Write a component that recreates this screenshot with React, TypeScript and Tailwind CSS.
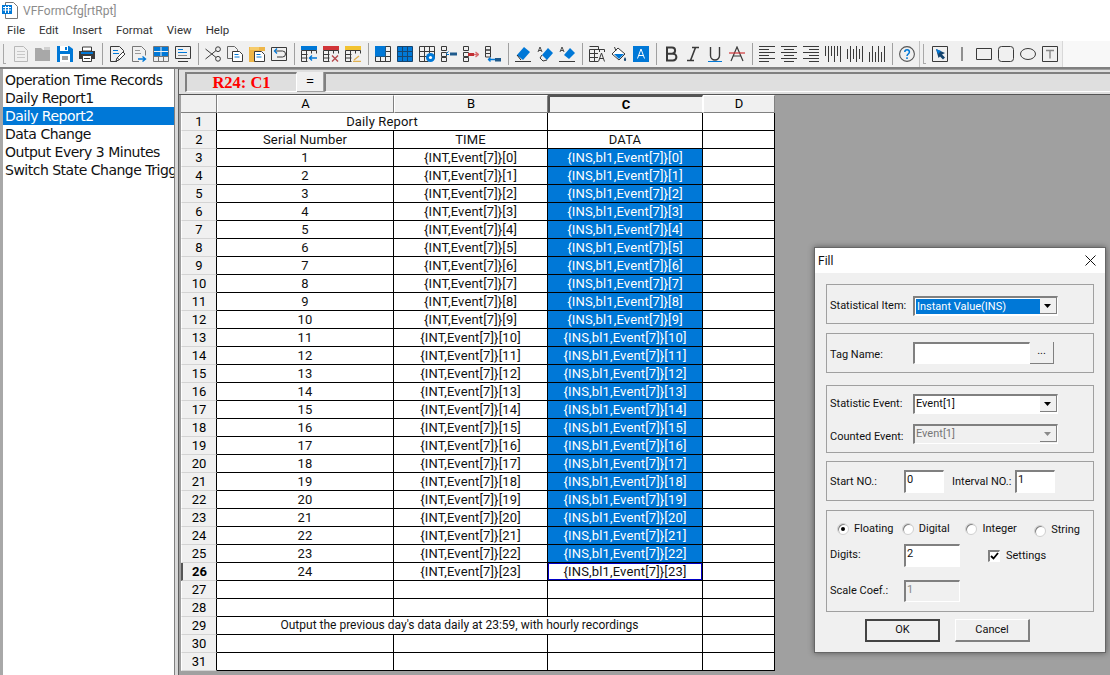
import type { ReactNode } from "react";

const BLUE = "#0078d7";
const DARK = "#3a3a3a";

const Ico = ({ children }: { children: ReactNode }) => (
  <svg width="16" height="16" viewBox="0 0 16 16" fill="none" stroke={DARK} strokeWidth="1" className="block">
    {children}
  </svg>
);

const Doc = ({ c = DARK }: { c?: string }) => <path d="M1.5 .5h9l4 4v11h-13z" stroke={c} />;
const Lines = ({ c = BLUE }: { c?: string }) => <path d="M4 4.5h5M4 7.5h6" stroke={c} />;
const TableGrid = () => <path d="M.5 3.5h15v12H.5zM.5 7.5h15M.5 11.5h15M5.5 3.5v12M10.5 3.5v12" />;

const toolbarGroups: ReactNode[][] = [
  [
    <Ico><Doc c="#b8b8b8" /><path d="M4 5.5h8M4 8.5h8M4 11.5h8" stroke="#c8c8c8" /></Ico>,
    <Ico><path d="M0 2h6l2 2h7v11H0z" fill="#a8a8a8" stroke="none" /><path d="M9 1h6v3H9z" fill="#d0d0d0" stroke="none" /></Ico>,
    <Ico><path d="M0 0h12l4 3v13H0z" fill={BLUE} stroke="none" /><path d="M3 0h8v5H3z" fill="#fff" stroke="none" /><path d="M8 1h2v3H8z" fill={BLUE} stroke="none" /><path d="M3 8h10v8H3z" fill="#fff" stroke="none" /><path d="M5 11h6M5 13h6" stroke={DARK} /></Ico>,
    <Ico><path d="M3.5 1v4h9V1z" fill="#fff" stroke={DARK} /><path d="M0 5h16v8H0z" fill={DARK} stroke="none" /><path d="M2 7h12" stroke={BLUE} strokeWidth="2" /><path d="M3.5 9.5h9v6h-9z" fill="#fff" stroke={DARK} /><path d="M5 12.5h6" /></Ico>,
  ],
  [
    <Ico><path d="M8 15.5H1.5V.5h9l4 4v3" /><Lines /><path d="M7 15l1-3 6-6 2 2-6 6z" fill="#fff" /><path d="M8.5 12l2 2" /></Ico>,
    <Ico><path d="M8 15.5H1.5V.5h9l4 4v5" stroke="#777" /><path d="M4 4.5h5M4 7.5h6" stroke="#999" /><path d="M7 13h7M11.5 10.5L14.5 13l-3 2.5" stroke={BLUE} strokeWidth="1.4" /></Ico>,
    <Ico><path d="M.5.5h15v15H.5zM.5 10.5h15M5.5 10.5v5M10.5 10.5v5" stroke="#777" /><path d="M1 1h6.5v4H1zM8.5 1H15v4H8.5zM1 6h6.5v4H1zM8.5 6H15v4H8.5z" fill={BLUE} stroke="none" /></Ico>,
    <Ico><path d="M.5.5h15v12H.5zM3 15.5h10" /><path d="M3 3.5h5M3 6.5h9" stroke={BLUE} /><path d="M3 9.5h9" stroke="#888" /></Ico>,
  ],
  [
    <Ico><circle cx="13" cy="3.2" r="2.4" /><circle cx="13" cy="12.8" r="2.4" /><path d="M11 4.6L.5 13M11 11.4L.5 3" /></Ico>,
    <Ico><path d="M.5.5h7l3 3v9h-10z" stroke="#666" /><path d="M5.5 5.5h7l3 3v7h-10z" fill="#fff" /><path d="M7.5 8.5h4M7.5 11h5" stroke={BLUE} /></Ico>,
    <Ico><path d="M0 1h16v4H8v11H0z" fill="#eeb648" stroke="none" /><path d="M1 1h9v3H1z" fill="#f6cb6a" stroke="none" /><path d="M5.5 5.5h7l3 3v7h-10z" fill="#fff" /><path d="M7.5 8.5h4M7.5 11h5" stroke={BLUE} /></Ico>,
    <Ico><path d="M.5 1.5h15v13H.5z" /><path d="M4 5h7.5a2.5 2.5 0 010 6H6" /><path d="M6 2.5L3.5 5 6 7.5" stroke={BLUE} strokeWidth="1.3" /></Ico>,
  ],
  [
    <Ico><path d="M0 0h16v4H0z" fill={BLUE} stroke="none" /><path d="M.5 4.5h15v3M.5 4.5v11h6M.5 8.5h6M.5 12h6M5.5 4.5v11M10.5 4.5v3" /><path d="M8 12h8M11 9.5L8.5 12l2.5 2.5" stroke={BLUE} strokeWidth="1.4" /></Ico>,
    <Ico><path d="M0 0h16v4H0z" fill="#d13438" stroke="none" /><path d="M.5 4.5h15v3M.5 4.5v11h6M.5 8.5h6M.5 12h6M5.5 4.5v11M10.5 4.5v3" /><path d="M9 9.5l6 6M15 9.5l-6 6" stroke="#b5484b" strokeWidth="1.4" /></Ico>,
    <Ico><path d="M0 0h16v4H0z" fill="#f2c230" stroke="none" /><path d="M.5 4.5h15v3M.5 4.5v11h6M.5 8.5h6M.5 12h6M5.5 4.5v11M10.5 4.5v3" /><path d="M9 14l5-4M8 15.5h8" stroke="#e0b050" strokeWidth="1.4" /></Ico>,
  ],
  [
    <Ico><path d="M.5.5h15v15H.5zM.5 10.5h15M5.5 10.5v5M10.5 10.5v5M10.5.5v10M10.5 5.5h5" /><path d="M0 0h10.5v10.5H0z" fill={BLUE} stroke="none" /></Ico>,
    <Ico><path d="M.5.5h15v15H.5z" fill={BLUE} stroke="#16456f" /><path d="M.5 5.5h15M.5 10.5h15M5.5.5v15M10.5.5v15" stroke="#16456f" /></Ico>,
    <Ico><path d="M.5.5h15v12M.5.5v15h9M.5 5.5h15M.5 10.5h8M5.5.5v15M10.5.5v7" /><circle cx="11.5" cy="11.5" r="4.5" fill={BLUE} stroke="none" /><circle cx="11.5" cy="11.5" r="1.6" fill="#fff" stroke="none" /></Ico>,
    <Ico><path d="M.5.5h5v4h-5zM.5 6.5h5v4h-5zM.5 11.5h5v4h-5z" /><path d="M5.5 8.5H8" stroke={BLUE} /><path d="M7.5 5.5L5.5 7.5" stroke={BLUE} /><path d="M9 6.5h7v3H9z" fill="#1f5a8c" stroke="none" /></Ico>,
    <Ico><path d="M.5.5h5v4h-5zM.5 6.5h5v4h-5zM.5 11.5h5v4h-5z" /><path d="M5 7h6v3H5z" fill="#c02f33" stroke="none" /><path d="M11 8.5h4M12.5 6L15.5 8.5 12.5 11" stroke="#d96a6d" strokeWidth="1.3" /></Ico>,
    <Ico><path d="M.5.5h5v3.5h-5zM.5 4h5v3.5h-5zM.5 7.5h5V11h-5z" /><path d="M3 13.5h7M5.5 11.5l-2 2 2 2" stroke={BLUE} strokeWidth="1.3" /><path d="M10 12h6v3.5h-6z" fill="#1f5a8c" stroke="none" /></Ico>,
  ],
  [
    <Ico><path d="M2 9l7-8 6 5-7 8z" fill={BLUE} stroke="none" /><path d="M2 9l4 5" stroke="#222" /><path d="M0 15.5h16" /></Ico>,
    <Ico><path d="M5 9l6-7 5 5-6 7z" fill={BLUE} stroke="none" /><path d="M5 9l-2 3 3 3 4-1" /><path d="M1 6L3 1l2 5M1.8 4.5h2.4" strokeWidth=".9" /></Ico>,
    <Ico><path d="M5 9l6-7 5 5-6 6z" fill={BLUE} stroke="none" /><path d="M1 6L3 1l2 5M1.8 4.5h2.4" strokeWidth=".9" /><path d="M0 15.5h16" /></Ico>,
  ],
  [
    <Ico><TableGrid /><path d="M.5.5h9v3" /><rect x="9" y="6" width="7" height="10" fill="#f0f0f0" stroke="none" /><path d="M9.5 15.5L12.5 7l3 8.5M10.8 12.5h3.6" /></Ico>,
    <Ico><path d="M1 8l6-6 7 6-6 6z" fill="#fff" /><path d="M3 8h10l-5 5z" fill={BLUE} stroke="none" /><path d="M5 5L3.5 1" /><path d="M14 11c-1.5 2-1.5 4 0 4s1.5-2 0-4z" fill="#16456f" stroke="none" /></Ico>,
    <Ico><path d="M0 0h16v16H0z" fill={BLUE} stroke="none" /><path d="M4.5 12.5L8 3l3.5 9.5M5.7 9.5h4.6" stroke="#fff" strokeWidth="1" /></Ico>,
  ],
  [
    <Ico><path d="M4 1.5h5a3 3 0 010 6.2H4zM4 7.7h6a3.4 3.4 0 010 6.8H4zM4 1v14" strokeWidth="2" /></Ico>,
    <Ico><path d="M7 1.5h7M2 14.5h7M10.5 1.5l-5 13" strokeWidth="1.6" /></Ico>,
    <Ico><path d="M3.5 1v8.5a4.5 4.5 0 009 0V1" strokeWidth="1.4" /><path d="M1 15.5h14" stroke={BLUE} /></Ico>,
    <Ico><path d="M2 15L8 1l6 14M4.5 10h7" strokeWidth="1.2" /><path d="M0 7h16" stroke="#d13438" strokeWidth="1.2" /></Ico>,
  ],
  [
    <Ico><path d="M0 .5h16M0 3.5h10M0 6.5h16M0 9.5h10M0 12.5h16M0 15.5h10" /></Ico>,
    <Ico><path d="M0 .5h16M3 3.5h10M0 6.5h16M3 9.5h10M0 12.5h16M3 15.5h10" /></Ico>,
    <Ico><path d="M0 .5h16M6 3.5h10M0 6.5h16M6 9.5h10M0 12.5h16M6 15.5h10" /></Ico>,
    <Ico><path d="M.5 0v10M3.5 0v16M6.5 0v10M9.5 0v16M12.5 0v10M15.5 0v16" /></Ico>,
    <Ico><path d="M.5 3v10M3.5 0v16M6.5 3v10M9.5 0v16M12.5 3v10M15.5 0v16" /></Ico>,
    <Ico><path d="M.5 6v10M3.5 0v16M6.5 6v10M9.5 0v16M12.5 6v10M15.5 0v16" /></Ico>,
  ],
  [
    <Ico><circle cx="8" cy="8" r="7.4" stroke="#555" strokeWidth="1.1" /><path d="M5.8 6c0-3 4.6-3 4.6 0 0 2-2.4 2-2.4 4" stroke={BLUE} strokeWidth="1.5" /><path d="M8 11.2v1.8" stroke={BLUE} strokeWidth="1.5" /></Ico>,
  ],
];

const drawTools: ReactNode[] = [
  <Ico><path d="M.5.5h15v15H.5z" /><path d="M4 3l9 4-3 1.5 3 3-2 2-3-3L6.5 12z" fill="#16456f" stroke="none" /><path d="M4 3l5 2-3 3z" fill={BLUE} stroke="none" /></Ico>,
  <Ico><path d="M8 1v14" stroke="#777" strokeWidth="1.6" /></Ico>,
  <Ico><path d="M.5 2.5h15v11H.5z" /></Ico>,
  <Ico><rect x=".5" y=".5" width="15" height="15" rx="3" /></Ico>,
  <Ico><ellipse cx="8" cy="8" rx="7.5" ry="5.5" /></Ico>,
  <Ico><path d="M.5.5h15v15H.5z" /><path d="M4 4.5h8M8 4.5v8" stroke="#888" strokeWidth="1.4" /></Ico>,
];

const Grip = () => <div className="w-[3px] h-[20px] ml-[3px] mr-[4px] border-l border-b border-[#a8a8a8] shrink-0" />;
const Sep = () => <div className="w-[8px] h-[22px] flex justify-center shrink-0"><div className="w-px h-full bg-[#a0a0a0]" /></div>;
const Btn = ({ children }: { children: ReactNode }) => <div className="w-[22px] h-[22px] flex items-center justify-center shrink-0">{children}</div>;

function Toolbar() {
  return (
    <div className="h-[26px] flex bg-[#f8f8f8]">
      <div className="w-[1063px] h-full bg-[#f0f0f0] flex items-center border-r border-[#d8d8d8]">
        <Grip />
        {toolbarGroups.map((group, g) => (
          <div key={g} className="flex items-center">
            {g > 0 && <Sep />}
            {group.map((icon, i) => <Btn key={i}>{icon}</Btn>)}
          </div>
        ))}
        <div className="w-[1px] h-full bg-[#c0c0c0] ml-[1px]" />
        <Grip />
        <div className="flex items-center -ml-[1px]">
          {drawTools.map((icon, i) => <Btn key={i}>{icon}</Btn>)}
        </div>
      </div>
    </div>
  );
}

const reports = ["Operation Time Records", "Daily Report1", "Daily Report2", "Data Change", "Output Every 3 Minutes", "Switch State Change Trigger"];

function ReportList() {
  return (
    <div className="w-[175px] bg-white border-l-[3px] border-r border-[#808080] border-l-[#a8a8a8] shrink-0 overflow-hidden pt-[2px]">
      {reports.map((r, i) => (
        <div
          key={r}
          className={`h-[18px] pl-[2px] text-[14px] leading-[18px] whitespace-nowrap font-['DejaVu_Sans',sans-serif] tracking-[-0.5px] ${i === 2 ? "bg-[#0078d7] text-white" : "text-[#111]"}`}
        >
          {r}
        </div>
      ))}
    </div>
  );
}

function FormulaBar() {
  return (
    <div className="h-[26px] bg-[#dfdfdf] border-t border-b border-t-[#a0a0a0] border-b-[#555] flex items-start pt-[2px] pl-[6px]">
      <div className="w-[112px] h-[20px] border-t-2 border-l-2 border-t-[#808080] border-l-[#808080] border-b border-r border-b-white border-r-white text-center text-[#ff0000] font-bold text-[16.5px] leading-[18px] font-['Liberation_Serif',serif]">
        R24: C1
      </div>
      <div className="w-[27px] h-[20px] bg-[#f0f0f0] border-b border-r border-[#a0a0a0] text-center text-[13px] leading-[18px] font-['Liberation_Sans',sans-serif]">=</div>
      <div className="flex-1 h-[20px] border-t-2 border-l-2 border-t-[#808080] border-l-[#808080] border-b border-b-white" />
    </div>
  );
}

const cell = "h-[18px] border-r border-b border-black text-center leading-[17px] whitespace-nowrap overflow-hidden text-[#111]";

const Head = ({ label, bold }: { label: string; bold?: boolean }) => (
  <div className={`h-[18px] bg-[#f0f0f0] border-t border-l border-t-white border-l-white border-r border-b border-r-[#808080] border-b-[#808080] text-center text-[13px] leading-[16px] ${bold ? "font-bold" : ""}`}>
    {label}
  </div>
);

const RowHead = ({ n }: { n: number }) => (
  <div className={`h-[18px] bg-[#f0f0f0] border-r border-r-black border-b border-b-[#d4d4d4] text-center text-[13px] leading-[17px] ${n === 26 ? "font-bold border-l-2 border-l-[#555] border-b-[#808080]" : "border-l border-l-white"}`}>
    {n}
  </div>
);

function Sheet() {
  const body = `${cell} text-[13px] tracking-[0.15px]`;
  const rows: ReactNode[] = [];
  for (let n = 1; n <= 31; n++) {
    rows.push(<RowHead key={`h${n}`} n={n} />);
    if (n === 1) {
      rows.push(<div key="r1" className={`${body} col-span-2`}>Daily Report</div>);
      rows.push(<div key="r1c" className={body} />);
    } else if (n === 2) {
      rows.push(<div key="a" className={body}>Serial Number</div>, <div key="b" className={body}>TIME</div>, <div key="c" className={body}>DATA</div>);
    } else if (n === 29) {
      rows.push(<div key="r29" className={`${cell} text-[12px] col-span-3`}>Output the previous day's data daily at 23:59, with hourly recordings</div>);
    } else if (n >= 3 && n <= 26) {
      const i = n - 3;
      rows.push(<div key={`a${n}`} className={body}>{i + 1}</div>);
      rows.push(<div key={`b${n}`} className={body}>{`{INT,Event[7]}[${i}]`}</div>);
      rows.push(
        <div key={`c${n}`} className={`${body} ${n === 26 ? "shadow-[inset_1px_1px_0_#0000c8,inset_-1px_-1px_0_#0000c8]" : "bg-[#0078d7] text-white"}`}>
          {`{INS,bl1,Event[7]}[${i}]`}
        </div>
      );
    } else {
      rows.push(<div key={`a${n}`} className={body} />, <div key={`b${n}`} className={body} />, <div key={`c${n}`} className={body} />);
    }
    rows.push(<div key={`d${n}`} className={body} />);
  }
  return (
    <div className="ml-[2px] w-[594px] grid grid-cols-[36px_177px_154px_155px_72px] bg-white font-['Roboto',sans-serif]">
      <div className="h-[18px] bg-[#f0f0f0] border-r border-b border-[#808080]" />
      <Head label="A" />
      <Head label="B" />
      <div className="h-[18px] bg-[#f0f0f0] border-t-2 border-l-2 border-t-[#555] border-l-[#555] border-b border-r border-b-[#808080] border-r-white text-center text-[13px] leading-[15px] font-bold">C</div>
      <Head label="D" />
      {rows}
    </div>
  );
}

const sunken = "border-t-2 border-l-2 border-t-[#808080] border-l-[#808080] border-b border-r border-b-white border-r-white";

const Group = ({ className, children }: { className: string; children: ReactNode }) => (
  <div className={`w-[268px] ml-[11px] border border-[#a0a0a0] ${className}`}>{children}</div>
);

const Arrow = ({ disabled }: { disabled?: boolean }) => (
  <div className="w-[17px] h-[16px] bg-[#f0f0f0] border-r border-b border-[#808080] flex items-center justify-center shrink-0">
    <svg width="8" height="4" viewBox="0 0 8 4"><path d="M0 0h7L3.5 4z" fill={disabled ? "#8a8a8a" : "#000"} /></svg>
  </div>
);

const Select = ({ value, selected, disabled }: { value: string; selected?: boolean; disabled?: boolean }) => (
  <div className={`w-[145px] h-[20px] ${sunken} flex ${disabled ? "bg-[#f0f0f0] text-[#777]" : "bg-white"}`}>
    <div className={`flex-1 pl-[1px] leading-[16px] ${selected ? "bg-[#0078d7] text-white m-[1px] h-[15px] mr-0" : ""}`}>{value}</div>
    <Arrow disabled={disabled} />
  </div>
);

const Radio = ({ label, checked, className }: { label: string; checked?: boolean; className: string }) => (
  <div className={`flex items-center ${className}`}>
    <div className="w-[12px] h-[12px] rounded-full bg-white border border-[#d0d0d0] shadow-[inset_1px_1px_0_#808080] flex items-center justify-center mr-[5px]">
      {checked && <div className="w-[4px] h-[4px] rounded-full bg-black" />}
    </div>
    <span>{label}</span>
  </div>
);

function FillDialog() {
  return (
    <div className="absolute left-[814px] top-[247px] w-[292px] h-[406px] bg-[#f0f0f0] border border-[#666] shadow-[0_0_6px_rgba(0,0,0,0.45)] font-['Roboto',sans-serif] text-[11px] text-[#111] whitespace-nowrap">
      <div className="h-[25px] bg-white flex items-center justify-between pl-[3px] pr-[9px] text-[12px]">
        <span>Fill</span>
        <svg width="11" height="11" viewBox="0 0 11 11" stroke="#111"><path d="M.5.5l10 10M10.5.5l-10 10" /></svg>
      </div>

      <Group className="mt-[11px] h-[40px] flex items-center pl-[3px] pt-[4px]">
        <span className="w-[83px]">Statistical Item:</span>
        <Select value="Instant Value(INS)" selected />
      </Group>

      <Group className="mt-[9px] h-[40px] flex items-center pl-[3px]">
        <span className="w-[83px] mt-[5px]">Tag Name:</span>
        <div className={`w-[117px] h-[22px] bg-white ${sunken}`} />
        <div className="w-[24px] h-[22px] bg-[#f0f0f0] border-r border-b border-[#808080] text-center leading-[18px]">...</div>
      </Group>

      <Group className="mt-[12px] h-[68px] flex flex-col pl-[3px] pt-[8px] gap-[9px]">
        <div className="flex items-center">
          <span className="w-[83px]">Statistic Event:</span>
          <Select value="Event[1]" />
        </div>
        <div className="flex items-center">
          <span className="w-[83px] mt-[6px]">Counted Event:</span>
          <Select value="Event[1]" disabled />
        </div>
      </Group>

      <Group className="mt-[8px] h-[40px] flex items-center pl-[3px]">
        <span className="w-[74px] mt-[3px]">Start NO.:</span>
        <div className={`w-[40px] h-[23px] bg-white pl-[1px] leading-[15px] ${sunken}`}>0</div>
        <span className="ml-[8px] w-[63px] mt-[3px]">Interval NO.:</span>
        <div className={`w-[40px] h-[23px] bg-white pl-[1px] leading-[15px] ${sunken}`}>1</div>
      </Group>

      <Group className="mt-[9px] h-[102px] flex flex-col pl-[3px] pt-[9px]">
        <div className="flex h-[18px] pl-[7px] items-center">
          <Radio label="Floating" checked className="w-[66px]" />
          <Radio label="Digital" className="w-[65px]" />
          <Radio label="Integer" className="w-[70px]" />
          <Radio label="String" className="w-[60px] mt-[3px]" />
        </div>
        <div className="flex items-center mt-[6px]">
          <span className="w-[74px]">Digits:</span>
          <div className={`w-[56px] h-[23px] bg-white pl-[1px] leading-[15px] ${sunken}`}>2</div>
          <div className={`ml-[28px] w-[12px] h-[12px] bg-white ${sunken} flex items-center justify-center`}>
            <svg width="9" height="8" viewBox="0 0 9 8" fill="none" stroke="#000" strokeWidth="1.8"><path d="M1 4l2.5 2.5L8 1" /></svg>
          </div>
          <span className="ml-[6px] mt-[2px]">Settings</span>
        </div>
        <div className="flex items-center mt-[13px]">
          <span className="w-[74px]">Scale Coef.:</span>
          <div className={`w-[56px] h-[22px] bg-[#f0f0f0] pl-[1px] leading-[15px] text-[#888] ${sunken}`}>1</div>
        </div>
      </Group>

      <div className="flex ml-[50px] mt-[7px] gap-[15px]">
        <div className="w-[75px] h-[23px] border-2 border-[#444] text-center leading-[18px]">OK</div>
        <div className="w-[75px] h-[23px] border-b-2 border-r-2 border-[#808080] border-t border-l border-t-white border-l-white text-center leading-[19px]">Cancel</div>
      </div>
    </div>
  );
}

export default function App() {
  return (
    <div className="relative h-screen w-full overflow-hidden bg-white flex flex-col font-['Roboto',sans-serif]">
      <div className="h-[21px] flex items-center pl-[2px] shrink-0">
        <svg width="16" height="17" viewBox="0 0 16 17" fill="none" className="mr-[5px]">
          <path d="M3.5.5h8l4 4v12h-12z" stroke="#777" fill="#fff" />
          <path d="M0 3h10v9H0z" fill={BLUE} />
          <path d="M1 5.5h8M1 8h8M3.5 4v7M6.5 4v7" stroke="#fff" />
        </svg>
        <span className="text-[12px] text-[#8c8c8c]">VFFormCfg[rtRpt]</span>
      </div>

      <div className="h-[20px] flex items-center pl-[7px] gap-[14px] text-[11.5px] text-[#333] shrink-0">
        <span>File</span>
        <span>Edit</span>
        <span>Insert</span>
        <span>Format</span>
        <span>View</span>
        <span>Help</span>
      </div>

      <Toolbar />

      <div className="flex-1 min-h-0 flex border-t-2 border-[#808080]">
        <ReportList />
        <div className="w-[4px] bg-[#d8d8d8] border-r border-[#606060] shrink-0" />
        <div className="flex-1 min-w-0 flex flex-col bg-[#a0a0a0]">
          <FormulaBar />
          <Sheet />
        </div>
      </div>

      <FillDialog />
    </div>
  );
}
